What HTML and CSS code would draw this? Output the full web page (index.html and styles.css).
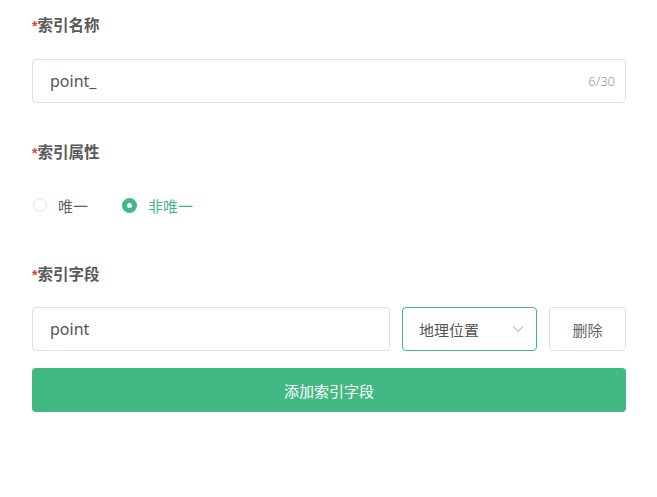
FILE: index.html
```html
<!DOCTYPE html>
<html lang="zh">
<head>
<meta charset="utf-8">
<link rel="stylesheet" href="styles.css">
</head>
<body>
<div class="form">
  <div class="label label-first"><span class="req">*</span>索引名称</div>
  <div class="input-box">
    <span class="input-text">point_</span>
    <span class="counter">6/30</span>
  </div>

  <div class="label label-gap"><span class="req">*</span>索引属性</div>
  <div class="radios">
    <div class="radio"><span class="dot"></span><span>唯一</span></div>
    <div class="radio checked"><span class="dot"></span><span>非唯一</span></div>
  </div>

  <div class="label label-gap2"><span class="req">*</span>索引字段</div>
  <div class="field-row">
    <div class="input-box field-input"><span class="input-text">point</span></div>
    <div class="select">
      <span>地理位置</span>
      <svg class="chev" width="12" height="8" viewBox="0 0 12 8"><path d="M1 1.5 L6 6.5 L11 1.5" fill="none" stroke="#c0c4cc" stroke-width="1.1"/></svg>
    </div>
    <div class="btn-del">删除</div>
  </div>
  <div class="btn-add">添加索引字段</div>
</div>
</body>
</html>
```

FILE: styles.css
```css
html, body {
  margin: 0;
  padding: 0;
  background: #fff;
}
body {
  font-family: "Noto Sans", "Noto Sans CJK SC", sans-serif;
  color: #606266;
}
.form {
  padding: 14px 31px 0 32px;
}
.label {
  font-size: 15.5px;
  line-height: 20px;
  height: 20px;
  font-weight: 700;
  color: #5a5a5a;
  font-family: "Noto Sans CJK SC", sans-serif;
}
.req {
  color: #e53935;
  font-weight: 700;
  font-size: 14px;
  font-family: "Liberation Sans", sans-serif;
}
.label-first { margin-bottom: 25px; }
.label-gap { margin-top: 38px; margin-bottom: 34px; }
.label-gap2 { margin-top: 48px; margin-bottom: 24px; }

.input-box {
  box-sizing: border-box;
  height: 44px;
  border: 1px solid #dcdfe6;
  border-radius: 4px;
  display: flex;
  align-items: center;
  justify-content: space-between;
  padding: 0 10px 0 17px;
}
.input-text {
  font-size: 16px;
  color: #555;
}
.counter {
  font-size: 13px;
  color: #909399;
  font-weight: 300;
}

.radios {
  display: flex;
  gap: 33px;
  height: 20px;
  align-items: center;
}
.radio {
  display: flex;
  align-items: center;
  gap: 11px;
  font-size: 15px;
  color: #606266;
  font-family: "Noto Sans CJK SC", sans-serif;
}
.dot {
  box-sizing: border-box;
  width: 14px;
  height: 14px;
  border-radius: 50%;
  border: 1px solid #dcdfe6;
  background: #fff;
  display: inline-block;
  margin-left: 1px;
}
.radio.checked { color: #42b983; }
.radio.checked .dot {
  width: 15px;
  height: 15px;
  margin-left: 1px;
  border: 5px solid #42b983;
  background: #fff;
}

.field-row {
  display: flex;
  gap: 12px;
}
.field-input {
  flex: 1;
}
.select {
  box-sizing: border-box;
  width: 135px;
  height: 44px;
  border: 1px solid #42b983;
  border-radius: 4px;
  display: flex;
  align-items: center;
  justify-content: space-between;
  padding: 0 12px 0 16px;
  font-size: 15px;
  color: #555;
  font-family: "Noto Sans CJK SC", sans-serif;
}
.btn-del {
  box-sizing: border-box;
  width: 77px;
  height: 44px;
  border: 1px solid #dcdfe6;
  border-radius: 4px;
  display: flex;
  align-items: center;
  justify-content: center;
  font-size: 15px;
  color: #606266;
  font-family: "Noto Sans CJK SC", sans-serif;
}
.btn-add {
  margin-top: 17px;
  height: 44px;
  border-radius: 4px;
  background: #42b983;
  color: #fff;
  display: flex;
  align-items: center;
  justify-content: center;
  font-size: 15px;
  font-family: "Noto Sans CJK SC", sans-serif;
}
```
